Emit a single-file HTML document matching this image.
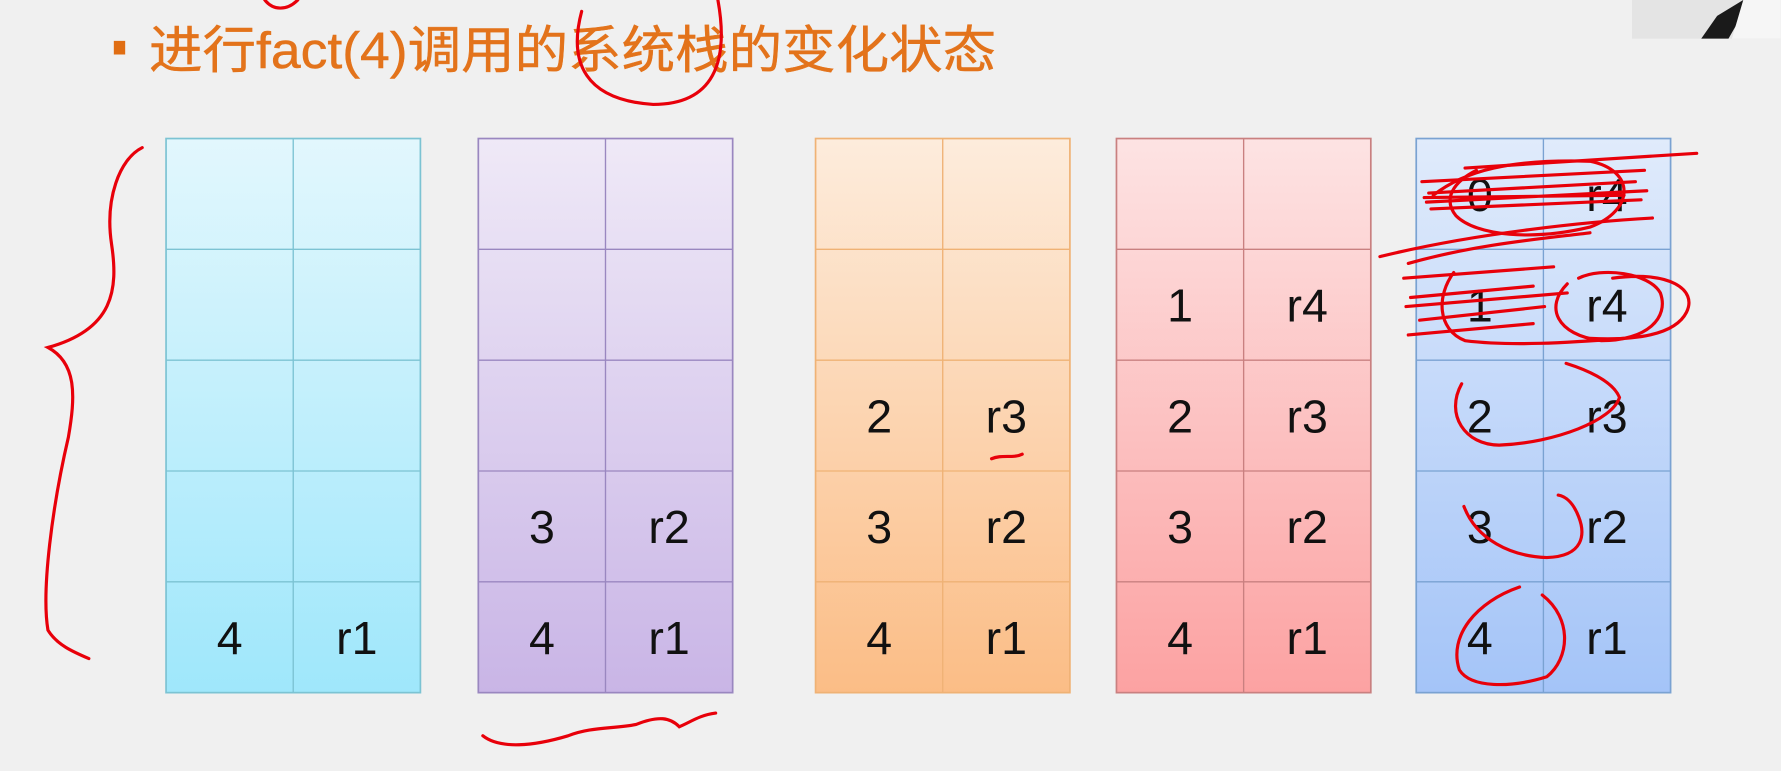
<!DOCTYPE html>
<html><head><meta charset="utf-8"><style>
html,body{margin:0;padding:0;background:#f0f0f0;overflow:hidden}
svg{display:block}
</style></head><body>
<svg width="1781" height="771" viewBox="0 0 1568 679" xmlns="http://www.w3.org/2000/svg">
<defs>
<linearGradient id="g1" x1="0" y1="0" x2="0" y2="1"><stop offset="0" stop-color="#e2f7fd"/><stop offset="1" stop-color="#9fe7fb"/></linearGradient>
<linearGradient id="g2" x1="0" y1="0" x2="0" y2="1"><stop offset="0" stop-color="#efe9f7"/><stop offset="1" stop-color="#c9b5e6"/></linearGradient>
<linearGradient id="g3" x1="0" y1="0" x2="0" y2="1"><stop offset="0" stop-color="#fdecdc"/><stop offset="1" stop-color="#fbbd86"/></linearGradient>
<linearGradient id="g4" x1="0" y1="0" x2="0" y2="1"><stop offset="0" stop-color="#fde3e3"/><stop offset="1" stop-color="#fca2a2"/></linearGradient>
<linearGradient id="g5" x1="0" y1="0" x2="0" y2="1"><stop offset="0" stop-color="#e0ebfb"/><stop offset="1" stop-color="#a4c4f8"/></linearGradient>
</defs>
<rect width="1568" height="679" fill="#f0f0f0"/>
<rect x="1437" y="0" width="131" height="34" fill="#e4e4e4"/>
<path d="M1498,34 L1512,14 L1535,0 L1550,0 L1530,20 L1522,34 Z" fill="#1a1a1a"/>
<path d="M1535,0 L1568,0 L1568,34 L1525,34 Z" fill="#f6f6f6"/>
<rect x="100" y="36" width="10" height="12" fill="#e06d12"/>
<text x="131" y="60" font-family="Liberation Sans, Noto Sans CJK SC, sans-serif" font-size="45" fill="#e3731b" stroke="#e3731b" stroke-width="0.4" textLength="746" lengthAdjust="spacingAndGlyphs">进行fact(4)调用的系统栈的变化状态</text>

<g font-family="Liberation Sans, sans-serif" font-size="41" fill="#111" text-anchor="middle">
<g>
<rect x="146" y="122" width="224" height="488" fill="url(#g1)" stroke="#7cc3d3" stroke-width="1.5"/>
<g stroke="#7cc3d3" stroke-width="1.2"><line x1="258" y1="122" x2="258" y2="610"/><line x1="146" y1="219.6" x2="370" y2="219.6"/><line x1="146" y1="317.2" x2="370" y2="317.2"/><line x1="146" y1="414.8" x2="370" y2="414.8"/><line x1="146" y1="512.4" x2="370" y2="512.4"/></g>
<text x="202" y="576">4</text><text x="314" y="576">r1</text>
</g>
<g>
<rect x="421" y="122" width="224" height="488" fill="url(#g2)" stroke="#9a87c0" stroke-width="1.5"/>
<g stroke="#9a87c0" stroke-width="1.2"><line x1="533" y1="122" x2="533" y2="610"/><line x1="421" y1="219.6" x2="645" y2="219.6"/><line x1="421" y1="317.2" x2="645" y2="317.2"/><line x1="421" y1="414.8" x2="645" y2="414.8"/><line x1="421" y1="512.4" x2="645" y2="512.4"/></g>
<text x="477" y="478">3</text><text x="589" y="478">r2</text>
<text x="477" y="576">4</text><text x="589" y="576">r1</text>
</g>
<g>
<rect x="718" y="122" width="224" height="488" fill="url(#g3)" stroke="#efb275" stroke-width="1.5"/>
<g stroke="#efb275" stroke-width="1.2"><line x1="830" y1="122" x2="830" y2="610"/><line x1="718" y1="219.6" x2="942" y2="219.6"/><line x1="718" y1="317.2" x2="942" y2="317.2"/><line x1="718" y1="414.8" x2="942" y2="414.8"/><line x1="718" y1="512.4" x2="942" y2="512.4"/></g>
<text x="774" y="381">2</text><text x="886" y="381">r3</text>
<text x="774" y="478">3</text><text x="886" y="478">r2</text>
<text x="774" y="576">4</text><text x="886" y="576">r1</text>
</g>
<g>
<rect x="983" y="122" width="224" height="488" fill="url(#g4)" stroke="#c98080" stroke-width="1.5"/>
<g stroke="#c98080" stroke-width="1.2"><line x1="1095" y1="122" x2="1095" y2="610"/><line x1="983" y1="219.6" x2="1207" y2="219.6"/><line x1="983" y1="317.2" x2="1207" y2="317.2"/><line x1="983" y1="414.8" x2="1207" y2="414.8"/><line x1="983" y1="512.4" x2="1207" y2="512.4"/></g>
<text x="1039" y="283">1</text><text x="1151" y="283">r4</text>
<text x="1039" y="381">2</text><text x="1151" y="381">r3</text>
<text x="1039" y="478">3</text><text x="1151" y="478">r2</text>
<text x="1039" y="576">4</text><text x="1151" y="576">r1</text>
</g>
<g>
<rect x="1247" y="122" width="224" height="488" fill="url(#g5)" stroke="#7aa2d2" stroke-width="1.5"/>
<g stroke="#7aa2d2" stroke-width="1.2"><line x1="1359" y1="122" x2="1359" y2="610"/><line x1="1247" y1="219.6" x2="1471" y2="219.6"/><line x1="1247" y1="317.2" x2="1471" y2="317.2"/><line x1="1247" y1="414.8" x2="1471" y2="414.8"/><line x1="1247" y1="512.4" x2="1471" y2="512.4"/></g>
<text x="1303" y="186">0</text><text x="1415" y="186">r4</text>
<text x="1303" y="283">1</text><text x="1415" y="283">r4</text>
<text x="1303" y="381">2</text><text x="1415" y="381">r3</text>
<text x="1303" y="478">3</text><text x="1415" y="478">r2</text>
<text x="1303" y="576">4</text><text x="1415" y="576">r1</text>
</g>
</g>

<g fill="none" stroke="#e8000a" stroke-width="2.8" stroke-linecap="round">
<path d="M125,130 C105,140 92,175 98,215 C104,255 100,290 42,306 C68,320 66,350 60,385 C46,445 36,520 42,555 C50,568 64,574 78,580"/>
<path d="M512,10 C500,55 515,88 575,92 C628,92 642,55 632,0"/>
<path d="M233,0 C240,9 252,10 262,0"/>
<path d="M425,648 C440,660 470,657 500,648 C520,640 540,642 560,638 C580,630 590,632 598,640 C608,636 615,630 630,628"/>
<path d="M873,404 C882,400 892,404 900,400"/>
<path d="M1262,172 C1290,150 1330,140 1400,142 C1440,150 1440,185 1400,200 C1350,212 1300,208 1282,190 C1270,175 1280,160 1300,150"/>
<path d="M1252,160 L1448,150 M1258,170 L1440,160 M1256,178 L1450,168 M1260,184 L1445,176 M1254,174 L1430,172 M1290,148 L1494,135"/>
<path d="M1215,226 C1300,205 1400,195 1455,192 M1240,232 C1300,215 1360,210 1400,205"/>
<path d="M1236,245 L1368,235 M1242,262 L1350,252 M1238,270 L1380,258 M1240,295 L1350,285 M1250,282 L1360,270 M1280,240 C1265,260 1265,290 1290,300 C1330,305 1380,302 1430,298"/>
<path d="M1380,250 C1360,270 1370,295 1410,300 C1450,300 1470,280 1462,258 C1452,240 1410,235 1390,245 M1420,245 C1470,238 1495,255 1485,275 C1475,295 1440,300 1400,298"/>
<path d="M1287,338 C1272,365 1290,392 1320,392 C1370,390 1420,370 1426,350 C1420,335 1395,325 1379,320"/>
<path d="M1289,446 C1300,475 1330,490 1362,491 C1395,490 1396,470 1390,455 C1385,442 1378,437 1372,436"/>
<path d="M1338,517 C1300,530 1275,560 1285,590 C1295,606 1330,606 1362,596 C1382,580 1385,545 1358,524"/>
</g>
</svg>
</body></html>
